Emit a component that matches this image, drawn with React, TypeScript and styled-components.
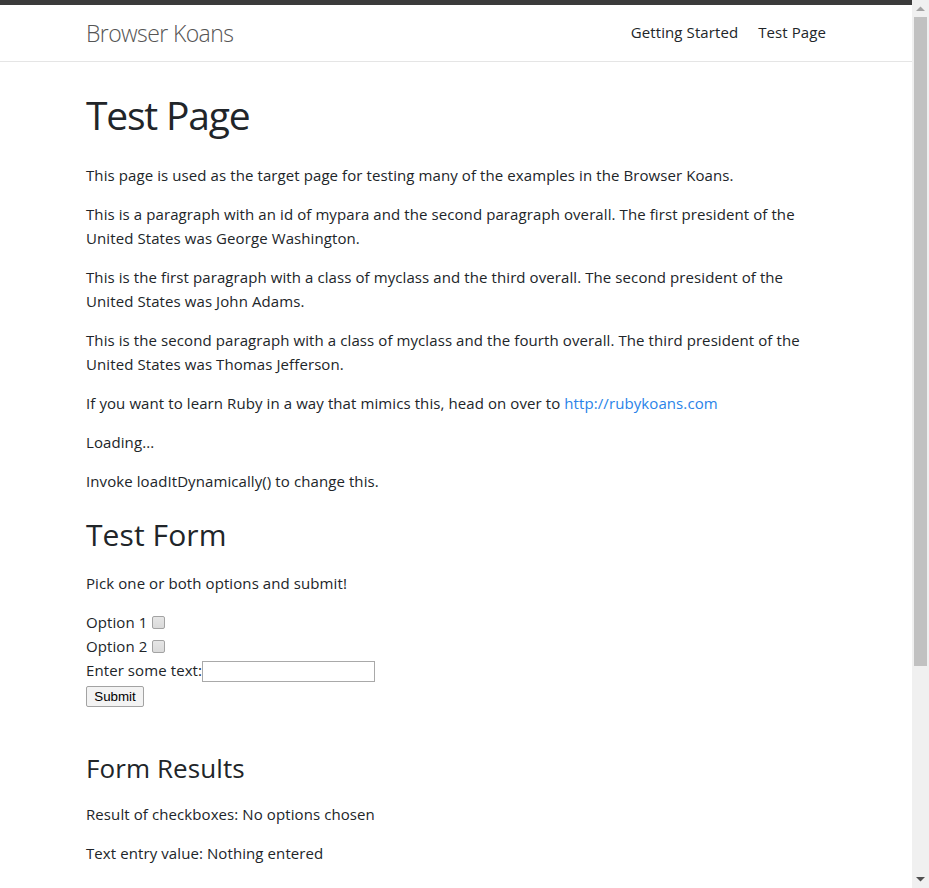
import React from 'react';
import styled, { createGlobalStyle } from 'styled-components';

const GlobalStyle = createGlobalStyle`
  html, body {
    margin: 0;
    padding: 0;
    height: 100%;
    overflow: hidden;
    background: #ffffff;
  }
  body {
    font-family: "Open Sans", "Noto Sans", sans-serif;
    font-size: 15px;
    line-height: 24px;
    letter-spacing: 0.09px;
    color: #212529;
  }
  #root { height: 100%; }
`;

const Frame = styled.div`
  display: flex;
  height: 100vh;
`;

const Page = styled.div`
  flex: 1;
  min-width: 0;
  overflow: hidden;
  background: #ffffff;
`;

const TopStrip = styled.div`
  height: 5px;
  background: #3b3b3b;
`;

const Navbar = styled.nav`
  height: 56px;
  border-bottom: 1px solid #e5e5e5;
`;

const Container = styled.div`
  width: 740px;
  margin: 0 auto;
`;

const NavInner = styled(Container)`
  height: 100%;
  display: flex;
  align-items: center;
  justify-content: space-between;
`;

const Brand = styled.a`
  font-family: "Open Sans", "Noto Sans", sans-serif;
  font-size: 23px;
  font-weight: 300;
  line-height: 30px;
  color: #555555;
  text-decoration: none;
  letter-spacing: -0.6px;
`;

const NavLinks = styled.ul`
  display: flex;
  gap: 20px;
  list-style: none;
  margin: 0 0 2px;
  padding: 0;
`;

const NavLink = styled.a`
  color: #212529;
  text-decoration: none;
  font-size: 15px;
  line-height: 24px;
`;

const Main = styled(Container)`
  padding-top: 29px;
`;

const Title = styled.h1`
  font-size: 39px;
  font-weight: 400;
  line-height: 48px;
  margin: 0 0 24px;
  letter-spacing: -1.2px;
`;

const SectionTitle = styled.h2`
  font-size: 30px;
  font-weight: 400;
  line-height: 36px;
  margin: 24px 0 18px;
`;

const SubTitle = styled.h3`
  font-size: 26px;
  font-weight: 400;
  line-height: 32px;
  margin: 45px 0 18px;
`;

const Para = styled.p`
  margin: 0 0 15px;
`;

const Link = styled.a`
  color: #2a83e8;
  text-decoration: none;
`;

const Form = styled.form`
  margin: 0;
`;

const Row = styled.div`
  display: flex;
  align-items: center;
  height: 24px;
`;

const Check = styled.input`
  appearance: none;
  -webkit-appearance: none;
  width: 13px;
  height: 13px;
  margin: 0 0 0 5px;
  box-sizing: border-box;
  border: 1px solid #a3a3a3;
  border-radius: 2px;
  background: linear-gradient(#e6e6e6, #dadada);
`;

const TextInput = styled.input`
  box-sizing: border-box;
  width: 173px;
  height: 21px;
  margin: 2px 0 0;
  padding: 1px 2px;
  border: 1px solid #a9a9a9;
  background: #ffffff;
  font-family: "Liberation Sans", Arial, sans-serif;
  font-size: 13.33px;
`;

const SubmitButton = styled.button`
  box-sizing: border-box;
  height: 21px;
  width: 58px;
  margin-top: 4px;
  padding: 0 6px;
  border: 1px solid #a3a3a3;
  border-radius: 2px;
  background: #f3f3f3;
  color: #000000;
  font-family: "Liberation Sans", Arial, sans-serif;
  font-size: 13.33px;
  line-height: 19px;
  letter-spacing: 0;
`;

const Scrollbar = styled.div`
  flex: none;
  width: 17px;
  background: #f0f0f0;
  display: flex;
  flex-direction: column;
`;

const ArrowButton = styled.div`
  height: 17px;
  display: flex;
  align-items: center;
  justify-content: center;
`;

const Thumb = styled.div`
  height: 649px;
  margin: 0 2px;
  background: #c1c1c1;
`;

const Track = styled.div`
  flex: 1;
`;

const Arrow = ({ dir, color }: { dir: 'up' | 'down'; color: string }) => (
  <svg width="9" height="5" viewBox="0 0 9 5">
    {dir === 'up' ? (
      <path d="M0 5 L4.5 0.5 L9 5 Z" fill={color} />
    ) : (
      <path d="M0 0 L4.5 4.5 L9 0 Z" fill={color} />
    )}
  </svg>
);

export default function App() {
  return (
    <>
      <GlobalStyle />
      <Frame>
        <Page>
          <TopStrip />
          <Navbar>
            <NavInner>
              <Brand href="#">Browser Koans</Brand>
              <NavLinks>
                <li><NavLink href="#">Getting Started</NavLink></li>
                <li><NavLink href="#">Test Page</NavLink></li>
              </NavLinks>
            </NavInner>
          </Navbar>
          <Main>
            <Title>Test Page</Title>
            <Para>This page is used as the target page for testing many of the examples in the Browser Koans.</Para>
            <Para>This is a paragraph with an id of mypara and the second paragraph overall. The first president of the United States was George Washington.</Para>
            <Para>This is the first paragraph with a class of myclass and the third overall. The second president of the United States was John Adams.</Para>
            <Para>This is the second paragraph with a class of myclass and the fourth overall. The third president of the United States was Thomas Jefferson.</Para>
            <Para>If you want to learn Ruby in a way that mimics this, head on over to <Link href="#">http://rubykoans.com</Link></Para>
            <Para>Loading...</Para>
            <Para>Invoke loadItDynamically() to change this.</Para>
            <SectionTitle>Test Form</SectionTitle>
            <Para>Pick one or both options and submit!</Para>
            <Form onSubmit={(e) => e.preventDefault()}>
              <Row>Option 1 <Check type="checkbox" /></Row>
              <Row>Option 2 <Check type="checkbox" /></Row>
              <Row>Enter some text:<TextInput type="text" /></Row>
              <SubmitButton type="submit">Submit</SubmitButton>
            </Form>
            <SubTitle>Form Results</SubTitle>
            <Para>Result of checkboxes: No options chosen</Para>
            <Para>Text entry value: Nothing entered</Para>
          </Main>
        </Page>
        <Scrollbar>
          <ArrowButton><Arrow dir="up" color="#a3a3a3" /></ArrowButton>
          <Thumb />
          <Track />
          <ArrowButton><Arrow dir="down" color="#505050" /></ArrowButton>
        </Scrollbar>
      </Frame>
    </>
  );
}
